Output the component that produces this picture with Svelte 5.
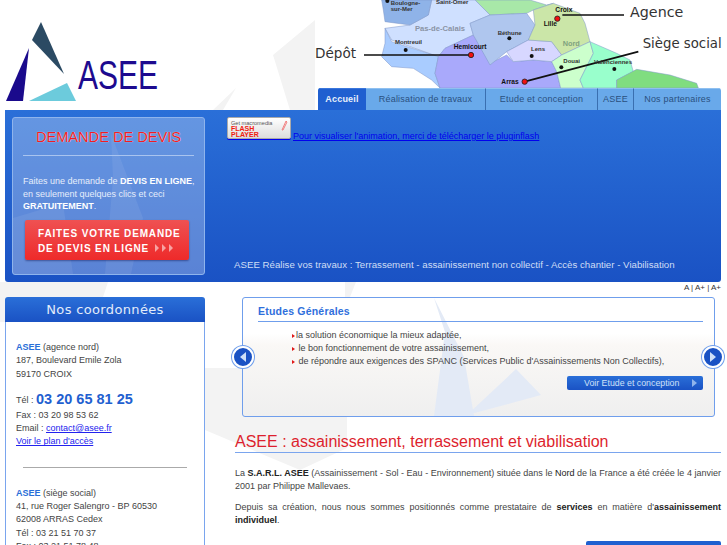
<script>
  const nav = [
    { label: 'Accueil', w: 48, active: true },
    { label: 'Réalisation de travaux', w: 120 },
    { label: 'Etude et conception', w: 112 },
    { label: 'ASEE', w: 36 },
    { label: 'Nos partenaires', w: 87 }
  ];
  const regions = [
    ['#a8e8a8', '525,0 690,0 740,15 760,10 700,30 680,40 570,45'],
    ['#cfe0ff', '395,0 525,0 570,45 510,70 520,105 435,145 415,170 275,120 255,85 330,75 385,45'],
    ['#8fb3e8', '245,0 395,0 385,45 330,75 255,65 250,30'],
    ['#a9ccff', '255,85 275,125 415,170 405,220 420,264 395,240 340,205 275,200 245,170 255,130'],
    ['#a9a9fb', '415,170 435,145 520,105 570,190 620,165 640,185 700,180 755,185 770,215 782,264 420,264 405,220'],
    ['#afc6ee', '510,70 570,45 680,40 705,75 685,120 620,155 570,195 520,105'],
    ['#d7d7ff', '620,155 685,120 755,125 785,165 755,185 700,180 640,185'],
    ['#cbe6a8', '700,30 760,10 840,40 855,70 870,125 785,165 755,125 685,120 705,75'],
    ['#ccffcc', '755,185 785,165 870,125 880,160 840,240 850,264 782,264 770,215'],
    ['#99ffcc', '870,125 950,160 990,180 1000,215 950,240 950,264 850,264 840,240 880,160'],
    ['#80dd80', '950,264 950,240 1010,208 1110,225 1190,250 1195,264']
  ];
  const dots = [[262,3],[317,150],[628,115],[695,168],[784,202],[943,207]];
  const reds = [[513,165],[772,56],[674,245]];
  const small = [['Boulogne-',272,14],['sur-Mer',272,34],['Saint-Omer',408,12],['Montreuil',285,132],['Béthune',593,105],['Lens',693,153],['Douai',790,189],['Valenciennes',882,192]];
  const strong = [['Hemicourt',461,148],['Croix',766,35],['Lille',731,79],['Arras',604,251]];
</script>

<div class="page">
  <svg class="wm" width="727" height="545" viewBox="0 0 727 545" aria-hidden="true">
    <path fill="#f3f3f3" d="M273 55 315 20V110H290ZM213 110 236 88 223 110ZM0 282H108L103 297 5 322H0ZM345 282H356L350 297H345ZM205 368H347V448L300 470 205 430Z" />
  </svg>

  <header class="top">
    <svg class="logo" width="300" height="110" viewBox="0 0 300 110" role="img" aria-label="ASEE">
      <polygon points="41,22 64,74 32,40" fill="#2b4a63" />
      <polygon points="29,48 6,101 23,101" fill="#1a0a8c" />
      <polygon points="29,101 67,83 76,101" fill="#6ccbdc" />
      <text x="78" y="89" class="logotext" textLength="80" lengthAdjust="spacingAndGlyphs">ASEE</text>
    </svg>
    <div class="topright">
      <svg class="map" width="427" height="88" viewBox="0 0 1281 264">
        {#each regions as r}
          <polygon points={r[1]} fill={r[0]} stroke="#7f96c8" stroke-width="1.5" />
        {/each}
        <path d="M192 165H513M787 45H972M674 245 1015 155" stroke="#111" stroke-width="5" fill="none" />
        {#each dots as d}
          <circle cx={d[0]} cy={d[1]} r="6" fill="#111" />
        {/each}
        {#each reds as d}
          <circle cx={d[0]} cy={d[1]} r="8" fill="#f01010" stroke="#222" stroke-width="2.5" />
        {/each}
        {#each small as t}
          <text class="mt" x={t[1]} y={t[2]}>{t[0]}</text>
        {/each}
        {#each strong as t}
          <text class="ms" x={t[1]} y={t[2]}>{t[0]}</text>
        {/each}
        <text class="dep" x="345" y="92" textLength="150" lengthAdjust="spacingAndGlyphs">Pas-de-Calais</text>
        <text class="dep nord" x="788" y="139">Nord</text>
        <text class="lab" x="45" y="175" textLength="123" lengthAdjust="spacingAndGlyphs">Dépôt</text>
        <text class="lab" x="990" y="52" textLength="160" lengthAdjust="spacingAndGlyphs">Agence</text>
        <text class="lab" x="1028" y="143" textLength="237" lengthAdjust="spacingAndGlyphs">Siège social</text>
      </svg>
      <nav class="nav">
        {#each nav as n}
          <a href="#top" class:active={n.active} style="width:{n.w}px">{n.label}</a>
        {/each}
      </nav>
    </div>
  </header>

  <section class="hero">
    <div class="quote">
      <svg class="quotewm" width="191" height="156" viewBox="0 0 191 156" aria-hidden="true">
        <path fill="#fff" fill-opacity="0.07" d="M98 16 130 100 118 156 92 156 100 60ZM0 100 50 85 60 156 0 156Z" />
      </svg>
      <h2>DEMANDE DE DEVIS</h2>
      <p>Faites une demande de <b>DEVIS EN LIGNE</b>,<br />en seulement quelques clics et ceci<br /><b>GRATUITEMENT</b>.</p>
      <a class="cta" href="#top">FAITES VOTRE DEMANDE<br />DE DEVIS EN LIGNE
        <svg class="arrows" width="20" height="8" viewBox="0 0 20 8"><path d="M1 0 5 4 1 8ZM8 0 12 4 8 8ZM15 0 19 4 15 8Z" fill="#f7a3a3" /></svg>
      </a>
    </div>
    <div class="herom">
      <a class="flashlink" href="#top"><span class="flash"><small>Get macromedia</small><b>FLASH<br />PLAYER</b><svg class="pen" width="7" height="11" viewBox="0 0 7 11"><path d="M1 10 5 1 6 2 2 10Z" fill="none" stroke="#f08080" /></svg></span><span class="fl">Pour visualiser l'animation, merci de télécharger le pluginflash</span></a>
      <p class="tag">ASEE Réalise vos travaux : Terrassement - assainissement non collectif - Accès chantier - Viabilisation</p>
    </div>
  </section>

  <div class="sizes">A | A+ | A+</div>

  <div class="cols">
    <aside class="side">
      <h2>Nos coordonnées</h2>
      <div class="sbody">
        <p><b>ASEE</b> (agence nord)<br />187, Boulevard Emile Zola<br />59170 CROIX</p>
        <p class="tel">Tél : <strong>03 20 65 81 25</strong></p>
        <p>Fax : 03 20 98 53 62<br />Email : <a href="#top">contact@asee.fr</a><br /><a href="#top">Voir le plan d'accès</a></p>
        <hr />
        <p><b>ASEE</b> (siège social)<br />41, rue Roger Salengro - BP 60530<br />62008 ARRAS Cedex<br />Tél : 03 21 51 70 37<br />Fax : 03 21 51 78 48</p>
      </div>
    </aside>

    <main class="main">
      <div class="slider">
        <svg class="panelwm" width="472" height="119" viewBox="0 0 472 119" aria-hidden="true">
          <path fill="#e3eaf6" d="M192 1 222 60 232 119H192L203 35ZM274 72 299 98 225 118Z" />
        </svg>
        <button class="round left" aria-label="Précédent"><svg width="8" height="10" viewBox="0 0 8 10"><path d="M7 0V10L1 5Z" fill="#cfe0f8" /></svg></button>
        <button class="round right" aria-label="Suivant"><svg width="8" height="10" viewBox="0 0 8 10"><path d="M1 0V10L7 5Z" fill="#cfe0f8" /></svg></button>
        <h3>Etudes Générales</h3>
        <ul>
          <li>la solution économique la mieux adaptée,</li>
          <li>&nbsp;le bon fonctionnement de votre assainissement,</li>
          <li>&nbsp;de répondre aux exigences des SPANC (Services Public d'Assainissements Non Collectifs),</li>
        </ul>
        <a class="more" href="#top">Voir Etude et conception<svg width="5" height="8" viewBox="0 0 5 8"><path d="M0 0 5 4 0 8Z" fill="#8fb4ec" /></svg></a>
      </div>

      <h1>ASEE : assainissement, terrassement et viabilisation</h1>
      <p class="para">La <b>S.A.R.L. ASEE</b> (Assainissement - Sol - Eau - Environnement) située dans le <em>Nord</em> de la France a été créée le 4 janvier 2001 par Philippe Mallevaes.</p>
      <p class="para">Depuis sa création, nous nous sommes positionnés comme prestataire de <b>services</b> en matière d'<b>assainissement individuel</b>.</p>
      <div class="bottombtn"></div>
    </main>
  </div>
</div>

<style>
  :global(body) { margin: 0; background: #fff; }
  .page { position: relative; width: 727px; height: 545px; overflow: hidden; font-family: "Liberation Sans", Arial, sans-serif; color: #444; font-size: 9px; }
  .wm { position: absolute; left: 0; top: 0; }
  .top { position: relative; display: flex; height: 110px; }
  .logo { flex: none; display: block; }
  .logotext { font-size: 40px; fill: #1d0a8f; }
  .topright { flex: 1; min-width: 0; }
  .map { display: block; }
  .mt { font-size: 18px; fill: #333; font-weight: 700; }
  .ms { font-size: 20px; fill: #111; font-weight: 700; }
  .dep { font-size: 22px; font-weight: 700; fill: #8a93a5; }
  .nord { fill: #7fa27f; }
  .lab { font-family: "DejaVu Sans", sans-serif; font-size: 42px; fill: #333; }
  .nav { display: flex; height: 22px; margin-left: 18px; margin-right: 6px; border-radius: 3px 3px 0 0; overflow: hidden; background: #69a9ea; }
  .nav a { box-sizing: border-box; flex: none; line-height: 20px; text-align: center; text-decoration: none; color: #2a5080; font-size: 9px; letter-spacing: 0.2px; border-right: 1px solid #3a6fb0; border-top: 1px solid #8fc0f0; }
  .nav a:last-child { border-right: 0; flex: 1; }
  .nav a.active { background: #1f5fd0; color: #e8f0fb; font-weight: 700; border-top-color: #3a76dc; border-right: 0; }

  .hero { position: relative; display: flex; box-sizing: border-box; height: 172px; margin: 0 6px 0 5px; padding: 7px; background: linear-gradient(#2a6fd8, #1a52c4); border-radius: 0 0 3px 3px; }
  .quote { position: relative; flex: none; box-sizing: border-box; width: 193px; height: 158px; padding: 10px 10px 0; background: rgba(255,255,255,.28); border: 1px solid #8fb4ec; border-radius: 3px; color: #e6eefb; }
  .quotewm { position: absolute; left: 0; top: 0; }
  .quote h2 { position: relative; margin: 0; padding-bottom: 8px; height: 19px; font-size: 14.6px; font-weight: 400; color: #f01c24; text-align: center; line-height: 19px; border-bottom: 1px solid #a9c4ef; white-space: nowrap; text-shadow: 0 0 1px #fff; }
  .quote p { position: relative; margin: 19px 0 0; line-height: 12.7px; font-size: 9px; white-space: nowrap; }
  .quote b { color: #fff; }
  .cta { position: relative; display: block; margin: 7px 5px 0 2px; height: 40px; box-sizing: border-box; padding: 7px 0 0 13px; background: linear-gradient(#ef5152, #ee2a2a); border-radius: 2px; color: #fff; font-weight: 700; font-size: 10px; letter-spacing: 0.85px; line-height: 14.5px; text-decoration: none; white-space: nowrap; box-shadow: 0 1px 2px rgba(0,0,60,.4); }
  .arrows { margin-left: 1px; }

  .herom { position: relative; flex: 1; padding-left: 22px; }
  .flashlink { display: block; color: #0000ee; font-size: 9px; line-height: 12px; white-space: nowrap; }
  .flash { position: relative; display: inline-block; overflow: hidden; box-sizing: border-box; width: 64px; height: 22px; padding: 2px 0 0 3px; margin-right: 2px; background: linear-gradient(#fff, #ddd); border: 1px solid #aaa; border-radius: 2px; color: #f02010; box-shadow: 0 1px 0 #0000ee; }
  .flash small { display: block; font-size: 5.6px; line-height: 6px; color: #555; }
  .flash b { display: block; font-size: 7px; line-height: 6px; }
  .pen { position: absolute; right: 2px; top: 2px; }
  .tag { position: absolute; left: 29px; bottom: 5px; margin: 0; color: #cfdef5; font-size: 9.7px; white-space: nowrap; }

  .sizes { position: relative; height: 15px; margin-right: 6px; text-align: right; font-size: 8px; line-height: 12px; color: #333; }

  .cols { position: relative; display: flex; padding-left: 5px; }
  .side { flex: none; width: 200px; }
  .side h2 { margin: 0; height: 25px; line-height: 25px; background: linear-gradient(#2a6fd8, #1a52c4); color: #e3ecfa; font-family: "DejaVu Sans", sans-serif; font-size: 13px; font-weight: 400; text-align: center; border-radius: 3px 3px 0 0; letter-spacing: 0.35px; }
  .sbody { box-sizing: border-box; height: 230px; padding: 19px 10px 0; background: #fff; border: 1px solid #7aa5ee; border-top: 0; }
  .sbody p { margin: 0; line-height: 13.3px; white-space: nowrap; }
  .sbody b { color: #2a6fd8; }
  .sbody a { color: #2222ee; }
  .sbody .tel { margin-top: 10px; line-height: 17px; }
  .tel strong { color: #1f60d0; font-size: 14.5px; vertical-align: -1px; }
  hr { margin: 18px 7px 19px 7px; border: 0; border-top: 1px solid #aaa; }

  .main { flex: 1; min-width: 0; padding-left: 8px; padding-right: 6px; }
  .slider { position: relative; box-sizing: border-box; width: 501px; height: 120px; }
  .slider::before { content: ""; position: absolute; top: 0; left: 29px; box-sizing: border-box; width: 473px; height: 120px; border: 1px solid #6f9eec; border-radius: 3px; background: linear-gradient(#fff 30%, #faf8f6 40%, #efefef); }
  .panelwm { position: absolute; left: 29px; top: 0; }
  h3 { position: relative; margin: 0 0 0 45px; width: 445px; height: 16px; padding-top: 8px; line-height: 12px; font-size: 10.5px; color: #2f6fdc; border-bottom: 1px solid #6f9eec; letter-spacing: 0.2px; }
  ul { position: relative; margin: 7px 0 0; padding: 0 0 0 79px; list-style: none; line-height: 13px; white-space: nowrap; }
  li::before { content: ""; display: inline-block; width: 0; height: 0; border-left: 3px solid #e01818; border-top: 2px solid transparent; border-bottom: 2px solid transparent; margin-right: 1px; }
  .more { position: absolute; left: 354px; top: 79px; display: block; box-sizing: border-box; width: 136px; height: 14px; line-height: 14px; padding-left: 17px; color: #cfe0f8; background: linear-gradient(#2a6fd8, #1a52c4); border-radius: 2px; text-decoration: none; font-size: 8.8px; white-space: nowrap; }
  .more svg { position: absolute; right: 6px; top: 3px; }
  .round { position: absolute; top: 49px; width: 22px; height: 22px; padding: 0; display: grid; place-items: center; border-radius: 50%; background: #1a52c4; border: 2px solid #fff; box-shadow: 0 0 0 1px #6f9eec; }
  .round svg { display: block; }
  .round.left { left: 19px; }
  .round.right { left: 489px; }

  h1 { position: relative; margin: 15px 0 0 22px; height: 20px; font-size: 16px; font-weight: 400; line-height: 20px; color: #dd1f2e; border-bottom: 1px solid #7aa5ee; white-space: nowrap; }
  .para { position: relative; margin: 14px 0 0 22px; line-height: 13.3px; text-align: justify; color: #444; }
  .para + .para { margin-top: 7px; }
  .para b { color: #222; }
  .para em { font-style: normal; color: #222; }
  .bottombtn { position: absolute; right: 6px; top: 244px; width: 135px; height: 14px; background: #1f60d0; border-radius: 2px; }
</style>
